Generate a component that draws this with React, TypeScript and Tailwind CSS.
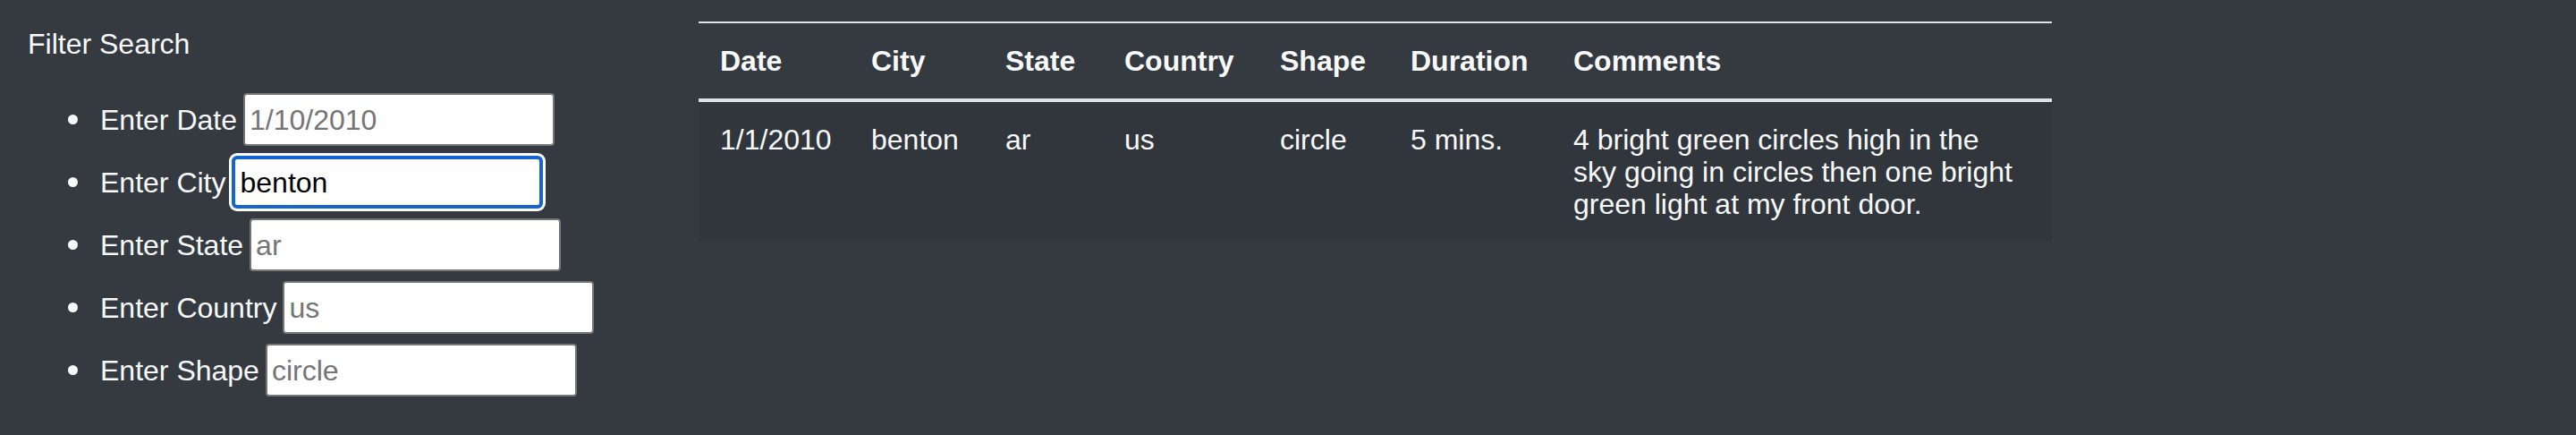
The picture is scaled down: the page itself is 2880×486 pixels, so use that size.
import React from "react";

const fields = [
  { label: "Enter Date", placeholder: "1/10/2010" },
  { label: "Enter City", value: "benton" },
  { label: "Enter State", placeholder: "ar" },
  { label: "Enter Country", placeholder: "us" },
  { label: "Enter Shape", placeholder: "circle" },
];

const columns = [
  { name: "Date", width: 169 },
  { name: "City", width: 150 },
  { name: "State", width: 133 },
  { name: "Country", width: 174 },
  { name: "Shape", width: 146 },
  { name: "Duration", width: 182 },
  { name: "Comments", width: 559 },
];

const rows = [
  [
    "1/1/2010",
    "benton",
    "ar",
    "us",
    "circle",
    "5 mins.",
    "4 bright green circles high in the sky going in circles then one bright green light at my front door.",
  ],
];

export default function App() {
  return (
    <main
      className="min-h-[486px] w-full bg-[#343a40] text-[#f8f9fa] text-[32px] flex"
      style={{ fontFamily: "'Liberation Sans', Arial, sans-serif" }}
    >
      {/* Filter panel */}
      <aside className="w-[781px] shrink-0 pl-[31px] pt-[30px]">
        <div className="h-[38px] leading-[38px]">Filter Search</div>
        <ul className="mt-[30px] pl-[45px]">
          {fields.map((f) => (
            <li key={f.label} className="flex items-center h-[70px]">
              <span className="w-[11px] h-[11px] rounded-full bg-[#f8f9fa] mr-[25px]" />
              <span className="leading-[38px] pt-[2px]">{f.label}</span>
              {f.value ? (
                <input
                  defaultValue={f.value}
                  className="ml-[7px] w-[348px] h-[59px] bg-white border-[4px] border-[#1565d0] rounded-[6px] shadow-[0_0_0_3px_#ffffff] px-[5px] pt-[2px] text-[32px] text-black outline-none"
                  style={{ fontFamily: "inherit" }}
                />
              ) : (
                <input
                  placeholder={f.placeholder}
                  className="ml-[7px] w-[348px] h-[59px] bg-white border-2 border-[#767676] rounded-[4px] px-[5px] pt-[2px] text-[32px] text-black placeholder:text-[#757575] outline-none"
                  style={{ fontFamily: "inherit" }}
                />
              )}
            </li>
          ))}
        </ul>
      </aside>

      {/* Results table */}
      <section className="w-[1513px] shrink-0 pt-[24px]">
        <table className="w-full table-fixed border-separate border-spacing-0 leading-[36px]">
          <colgroup>
            {columns.map((c) => (
              <col key={c.name} style={{ width: c.width }} />
            ))}
          </colgroup>
          <thead>
            <tr>
              {columns.map((c) => (
                <th
                  key={c.name}
                  className="text-left align-top font-bold px-[24px] py-[24px] border-t-2 border-b-4 border-[#dee2e6]"
                >
                  {c.name}
                </th>
              ))}
            </tr>
          </thead>
          <tbody>
            {rows.map((r, i) => (
              <tr key={i} className="bg-[#31363c]">
                {r.map((cell, j) => (
                  <td
                    key={j}
                    className={
                      j === r.length - 1
                        ? "align-top pl-[24px] pr-[36px] py-[24px]"
                        : "align-top px-[24px] py-[24px]"
                    }
                  >
                    {cell}
                  </td>
                ))}
              </tr>
            ))}
          </tbody>
        </table>
      </section>
    </main>
  );
}
